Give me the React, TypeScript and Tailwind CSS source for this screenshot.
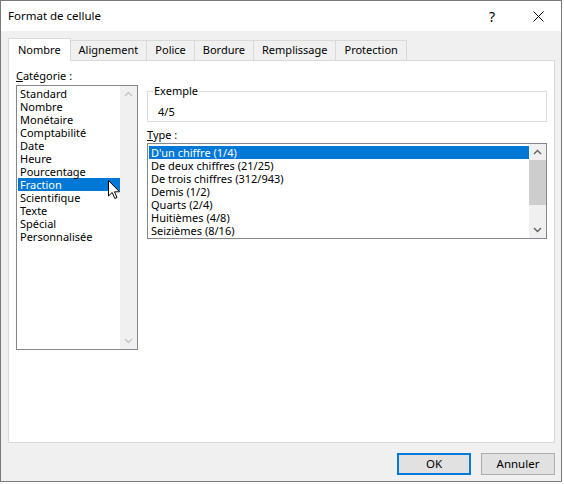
import { useState } from "react";

const categories = [
    'Standard', 'Nombre', 'Monétaire', 'Comptabilité', 'Date', 'Heure',
    'Pourcentage', 'Fraction', 'Scientifique', 'Texte', 'Spécial', 'Personnalisée'
]

const types = [
    "D'un chiffre (1/4)",
    'De deux chiffres (21/25)',
    'De trois chiffres (312/943)',
    'Demis (1/2)',
    'Quarts (2/4)',
    'Huitièmes (4/8)',
    'Seizièmes (8/16)'
]

const tabs = ['Nombre', 'Alignement', 'Police', 'Bordure', 'Remplissage', 'Protection']

function Chevron({ up, color }: { up?: boolean, color: string }) {
    return (
        <svg width="9" height="6" viewBox="0 0 9 6">
            <path d={up ? "M1 5 L4.5 1.5 L8 5" : "M1 1 L4.5 4.5 L8 1"} fill="none" stroke={color} strokeWidth="1.4" />
        </svg>
    )
}

function Cursor() {
    return (
        <svg width="13" height="20" viewBox="0 0 13 20" className="absolute left-[99px] top-[119px]">
            <path d="M0.5 0.5 L0.5 16 L4.2 12.5 L6.8 18.5 L9 17.5 L6.5 11.8 L11.5 11.8 Z" fill="#fff" stroke="#000" strokeWidth="1" />
        </svg>
    )
}

export default function App() {
    const [category, setCategory] = useState('Fraction')
    const [type, setType] = useState(0)

    return (
        <div className="w-[564px] h-[484px] bg-white" style={{ fontFamily: '"Segoe UI", "Noto Sans", sans-serif' }}>
            <div className="relative w-[562px] h-[482px] border border-[#7a7a7a] bg-[#f0f0f0] flex flex-col text-[11px] text-black">
                {/* barre de titre */}
                <div className="h-[30px] bg-white flex items-center pl-[7px] shrink-0 text-[11.5px]">
                    <span className="flex-1">Format de cellule</span>
                    <span className="w-[46px] text-center text-[14px]">?</span>
                    <span className="w-[46px] flex justify-center">
                        <svg width="11" height="11" viewBox="0 0 11 11">
                            <path d="M0.5 0.5 L10.5 10.5 M10.5 0.5 L0.5 10.5" stroke="#000" strokeWidth="1" />
                        </svg>
                    </span>
                </div>

                {/* onglets */}
                <div className="flex items-end h-[29px] pl-[7px]">
                    {tabs.map((tab, i) => (
                        i === 0 ? (
                            <div key={tab} className="relative z-10 h-[23px] -mb-px px-[9px] bg-white border border-b-0 border-[#d9d9d9] flex items-center">
                                {tab}
                            </div>
                        ) : (
                            <div key={tab} className="h-[20px] px-[8px] bg-[#f0f0f0] border border-l-0 border-b-0 border-[#d9d9d9] flex items-center">
                                {tab}
                            </div>
                        )
                    ))}
                </div>

                <div className="relative ml-[7px] w-[547px] h-[383px] bg-white border border-[#d9d9d9] flex px-[7px] pt-[7px] gap-[9px]">
                    {/* catégorie */}
                    <div className="flex flex-col w-[122px]">
                        <div className="h-[16px] leading-[16px]"><span className="underline">C</span>atégorie :</div>
                        <div className="mt-[1px] h-[265px] border border-[#828790] flex">
                            <div className="flex-1 pt-[1px] pl-[1px]">
                                {categories.map(c => (
                                    <div
                                        key={c}
                                        onClick={() => setCategory(c)}
                                        className={`h-[13px] leading-[13px] pl-[2px] whitespace-nowrap ${c === category ? 'bg-[#0078d7] text-white' : ''}`}>
                                        {c}
                                    </div>
                                ))}
                            </div>
                            <div className="w-[17px] bg-[#f0f0f0] flex flex-col justify-between items-center py-[5px]">
                                <Chevron up color="#c4c4c4" />
                                <Chevron color="#c4c4c4" />
                            </div>
                        </div>
                    </div>
                    <Cursor />

                    {/* partie droite */}
                    <div className="flex flex-col w-[400px] pt-[23px]">
                        <div className="relative h-[31px] border border-[#dcdcdc]">
                            <span className="absolute -top-[8px] left-[5px] bg-white px-[1px] leading-[14px]">Exemple</span>
                            <div className="pl-[10px] pt-[13px] leading-[14px]">4/5</div>
                        </div>
                        <div className="mt-[4px] h-[17px] leading-[17px]"><span className="underline">T</span>ype :</div>
                        <div className="h-[96px] border border-[#828790] flex">
                            <div className="flex-1 pt-[2px] pl-[1px]">
                                {types.map((t, i) => (
                                    <div
                                        key={t}
                                        onClick={() => setType(i)}
                                        className={`h-[13px] leading-[13px] pl-[2px] whitespace-nowrap ${i === type ? 'bg-[#0078d7] text-white' : ''}`}>
                                        {t}
                                    </div>
                                ))}
                            </div>
                            <div className="w-[17px] bg-[#f0f0f0] flex flex-col items-center">
                                <div className="h-[16px] flex items-center justify-center"><Chevron up color="#606060" /></div>
                                <div className="w-[17px] h-[45px] bg-[#cdcdcd]"></div>
                                <div className="flex-1"></div>
                                <div className="h-[16px] flex items-center justify-center"><Chevron color="#606060" /></div>
                            </div>
                        </div>
                    </div>
                </div>

                {/* boutons */}
                <div className="flex justify-end gap-[10px] pr-[6px] mt-[10px] text-[11.5px]">
                    <button className="w-[74px] h-[22px] bg-[#e1e1e1] border-2 border-[#0078d7]">OK</button>
                    <button className="w-[74px] h-[22px] bg-[#e1e1e1] border border-[#adadad]">Annuler</button>
                </div>
            </div>
        </div>
    )
}
